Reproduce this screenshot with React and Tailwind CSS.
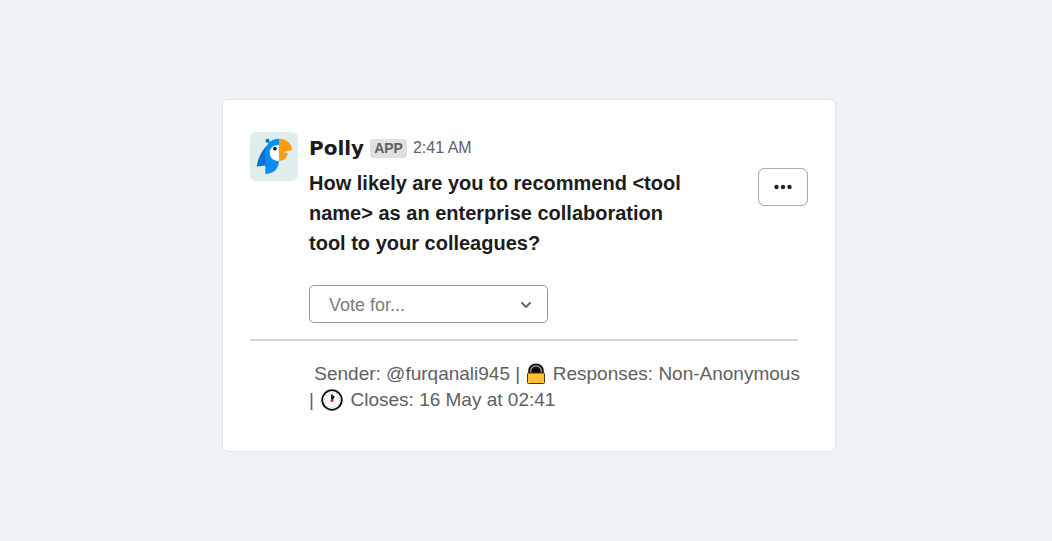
function PollyAvatar() {
  return (
    <svg viewBox="0 0 48 49" className="h-[49px] w-12 shrink-0" role="img" aria-label="Polly">
      <rect width="48" height="49" rx="6" fill="#dfeeed" />
      <path d="M19 12 C12 17 8 26 6.700 34.500 L16 33.500 L21 19 Z" fill="#0b72cf" />
      <circle cx="17.500" cy="8.800" r="2" fill="#0b72cf" />
      <path d="M17.500 9 L20.500 12" stroke="#0b72cf" strokeWidth="1.600" />
      <path d="M29 6.700 C20 6.700 15.300 13 15.300 21 V42 C23 42 29 37 29 28 Z" fill="#0a8cf5" />
      <path d="M29 13 C22.500 13 19.700 16.500 19.700 21 C19.700 26 23.500 29 29 29 Z" fill="#fff" />
      <circle cx="24.900" cy="16.700" r="1.900" fill="#14203a" />
      <path d="M29 6.700 C36 6.700 41.500 11.500 42.300 18 L29 21 Z" fill="#ff9a0a" />
      <path d="M29 19.500 L37.700 21 C37.500 25.500 33.500 29 29 29 Z" fill="#ff9a0a" />
    </svg>
  )
}

function LockIcon() {
  return (
    <svg viewBox="0 0 22 24" className="inline-block h-6 w-[22px] align-[-6px]" aria-hidden="true">
      <path d="M4 12 V9 C4 0 18 0 18 9 V12 Z" fill="#0b0b0b" stroke="#0b0b0b" strokeWidth="1.500" />
      <path d="M5.800 10.500 V9 C5.800 2.200 16.200 2.200 16.200 9 V10.500" fill="none" stroke="#b4b4b4" strokeWidth="1.200" />
      <rect x="2.500" y="11" width="17" height="10.500" rx="1" fill="#fdc02f" stroke="#4a3a14" strokeWidth="1" />
    </svg>
  )
}

function ClockIcon() {
  return (
    <svg viewBox="0 0 24 24" className="mx-px inline-block size-6 align-[-6px]" aria-hidden="true">
      <circle cx="12" cy="12" r="9.800" fill="#fafafa" stroke="#111" strokeWidth="1.800" />
      <circle cx="12" cy="12" r="7.500" fill="none" stroke="#aaa" strokeWidth="1" strokeDasharray="1 2.927" />
      <path d="M12 12.500 V6.500" stroke="#111" strokeWidth="1.800" />
      <path d="M12 12.500 L14 8" stroke="#111" strokeWidth="1.600" />
      <circle cx="12" cy="12.500" r="1.500" fill="#e2263c" />
    </svg>
  )
}

function App() {
  return (
    <main className="flex min-h-screen items-center justify-center bg-[#edf3f7] pt-[10px] pl-[6px] font-['Liberation_Sans',Arial,sans-serif]">
      <article className="w-full max-w-[614px] rounded-md border border-[#dfe5e8] bg-white pt-8 pr-[27px] pb-[38px] pl-[27px]">
        <div className="flex gap-[11px]">
          <PollyAvatar />
          <div className="min-w-0 flex-1">
            <header className="flex h-8 items-center gap-[6px]">
              <span className="font-['DejaVu_Sans',sans-serif] text-xl font-bold text-[#1d1c1d]">Polly</span>
              <span className="rounded-[3px] bg-[#e0e0e0] px-1 text-sm leading-[19px] font-bold text-[#616061]">APP</span>
              <time className="text-base text-[#616061]">2:41 AM</time>
            </header>
            <div className="flex items-start justify-between">
              <h1 className="max-w-[384px] pt-1 text-xl leading-[30px] font-bold text-[#1d1c1d]">
                How likely are you to recommend &lt;tool name&gt; as an enterprise collaboration tool to your colleagues?
              </h1>
              <button type="button" aria-label="More options" className="mt-1 flex h-[38px] w-[50px] shrink-0 items-center justify-center rounded-md border border-[#b0b0b0] bg-white shadow-[inset_0_0_1px_#b0b0b0]">
                <svg viewBox="0 0 20 6" className="h-[6px] w-5" fill="#252425">
                  <circle cx="3.500" cy="3" r="2.200" />
                  <circle cx="10" cy="3" r="2.200" />
                  <circle cx="16.500" cy="3" r="2.200" />
                </svg>
              </button>
            </div>
            <div className="relative mt-[27px] w-[239px]">
              <select aria-label="Vote for" className="h-[38px] w-full appearance-none rounded-[5px] border border-[#949494] bg-white px-[19px] pt-px text-lg text-[#7c7c7c]">
                <option>Vote for...</option>
              </select>
              <svg viewBox="0 0 12 8" className="pointer-events-none absolute top-4 right-4 h-2 w-3" fill="none" stroke="#696969" strokeWidth="2" strokeLinecap="round" strokeLinejoin="round">
                <path d="M2 2 L6 6 L10 2" />
              </svg>
            </div>
          </div>
        </div>
        <hr className="mt-4 mr-[10px] border-t-2 border-[#cdd5db]" />
        <p className="mt-5 mr-[5px] ml-[59px] text-[19px] leading-[26px] text-[#616061]">
          &nbsp;<span>Sender: @furqanali945</span> <span>|</span> <LockIcon /> <span>Responses: Non-Anonymous</span>{' '}
          <span>|</span> <ClockIcon /> <span>Closes: 16 May at 02:41</span>
        </p>
      </article>
    </main>
  )
}

export default App
